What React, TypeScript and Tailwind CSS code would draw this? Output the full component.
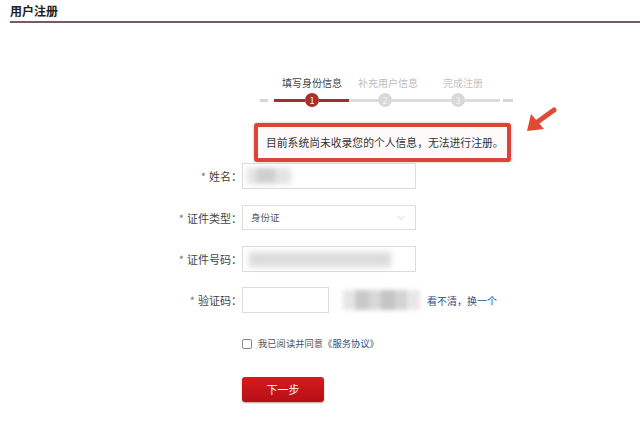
import { ChevronDown } from "lucide-react";

function StepTrack() {
  return (
    <div className="ml-[260px] mt-[3px] flex h-[14px] items-center">
      <div className="h-[3px] w-[8px] bg-[#d6d6d6]" />
      <div className="ml-[6px] h-[3px] w-[31px] bg-[#9e2f2a]" />
      <div className="grid h-[14px] w-[14px] place-items-center rounded-full bg-[#a8302a] text-[9px] leading-none text-white">
        1
      </div>
      <div className="h-[3px] w-[30px] bg-[#9e2f2a]" />
      <div className="h-[3px] w-[29px] bg-[#dcdcdc]" />
      <div className="grid h-[14px] w-[14px] place-items-center rounded-full bg-[#d9d9d9] text-[9px] leading-none text-[#f4f4f4]">
        2
      </div>
      <div className="h-[3px] w-[59px] bg-[#dcdcdc]" />
      <div className="grid h-[14px] w-[14px] place-items-center rounded-full bg-[#d9d9d9] text-[9px] leading-none text-[#f4f4f4]">
        3
      </div>
      <div className="h-[3px] w-[35px] bg-[#dcdcdc]" />
      <div className="ml-[3px] h-[3px] w-[10px] bg-[#d6d6d6]" />
    </div>
  );
}

function FieldLabel({ text }: { text: string }) {
  return (
    <div className="w-[72px] shrink-0 whitespace-nowrap text-right text-[11px] leading-[26px] text-[#444]">
      <span className="mr-[3px] text-[#777]">*</span>
      {text}：
    </div>
  );
}

export default function App() {
  return (
    <div className="h-[430px] w-[640px] overflow-hidden bg-white font-['Noto_Sans_CJK_SC',sans-serif] text-[#333]">
      <div className="ml-[10px] border-b-2 border-[#7a5a60] pt-[3px] pb-[2px]">
        <h1 className="text-[12px] font-bold leading-[16px] text-[#222]">用户注册</h1>
      </div>

      <div className="ml-[282px] mt-[53px] flex whitespace-nowrap text-[10px] leading-[14px]">
        <span className="w-[60px] text-center text-[#444]">填写身份信息</span>
        <span className="ml-[16px] w-[60px] text-center text-[#bdbdbd]">补充用户信息</span>
        <span className="ml-[25px] w-[40px] text-center text-[#c4c4c4]">完成注册</span>
      </div>
      <StepTrack />

      <div className="relative ml-[254px] mt-[16px] w-[257px]">
        <div className="flex h-[39px] items-center whitespace-nowrap rounded-[3px] border-4 border-[#d9453a] bg-[#fffafa] pl-[8px] text-[10.8px] text-[#333] shadow-[0_0_3px_rgba(200,60,50,0.4)]">
          目前系统尚未收录您的个人信息，无法进行注册。
        </div>
        <svg
          className="absolute left-[270px] -top-[17px]"
          width="34"
          height="30"
          viewBox="0 0 34 30"
          aria-hidden="true"
        >
          <line x1="12" y1="17" x2="30" y2="4" stroke="#e04a35" strokeWidth="5" strokeLinecap="round" />
          <polygon points="3,25 7,8 20,23" fill="#e04a35" />
        </svg>
      </div>

      <div className="ml-[170px] mt-[1px] flex flex-col">
        <div className="flex">
          <FieldLabel text="姓名" />
          <div className="relative h-[26px] w-[174px] border border-[#dcdcdc] bg-white">
            <div className="absolute left-[4px] top-[4px] h-[16px] w-[44px] bg-[#e2e2e2] blur-[3px]" />
            <div className="absolute left-[14px] top-[5px] h-[13px] w-[18px] bg-[#cfcfcf] blur-[2px]" />
          </div>
        </div>

        <div className="mt-[16px] flex">
          <FieldLabel text="证件类型" />
          <div className="flex h-[25px] w-[174px] items-center justify-between border border-[#dcdcdc] bg-white pl-[8px] pr-[8px]">
            <span className="text-[9.5px] text-[#555]">身份证</span>
            <ChevronDown className="h-[12px] w-[12px] text-[#b0b0b0]" strokeWidth={1.2} />
          </div>
        </div>

        <div className="mt-[15px] flex">
          <FieldLabel text="证件号码" />
          <div className="relative h-[26px] w-[174px] border border-[#dcdcdc] bg-white">
            <div className="absolute left-[6px] top-[5px] h-[15px] w-[142px] bg-[#dcdcdc] blur-[3px]" />
          </div>
        </div>

        <div className="mt-[15px] flex items-center">
          <FieldLabel text="验证码" />
          <div className="h-[26px] w-[87px] border border-[#dcdcdc] bg-white" />
          <div className="ml-[14px] flex h-[20px] w-[77px] overflow-hidden blur-[2px]">
            <div className="w-[12px] bg-[#e6e6e6]" />
            <div className="w-[14px] bg-[#c9c9c9]" />
            <div className="w-[12px] bg-[#d8d8d8]" />
            <div className="w-[14px] bg-[#c4c4c4]" />
            <div className="w-[12px] bg-[#d4d4d4]" />
            <div className="w-[13px] bg-[#e8e8e8]" />
          </div>
          <a className="ml-[7px] text-[10px] text-[#2c4f86]">看不清，换一个</a>
        </div>

        <div className="ml-[72px] mt-[24px] flex h-[14px] items-center">
          <span className="h-[10px] w-[10px] rounded-[2px] border border-[#8a8a8a] bg-white" />
          <span className="ml-[6px] text-[9.3px] text-[#555]">
            我已阅读并同意《<span className="text-[#2c4f86]">服务协议</span>》
          </span>
        </div>

        <button
          type="button"
          className="ml-[72px] mt-[26px] h-[25px] w-[82px] rounded-[3px] bg-gradient-to-b from-[#d81a1f] to-[#b50f14] text-[11px] text-white shadow-[0_1px_2px_rgba(120,0,0,0.4)]"
        >
          下一步
        </button>
      </div>
    </div>
  );
}
